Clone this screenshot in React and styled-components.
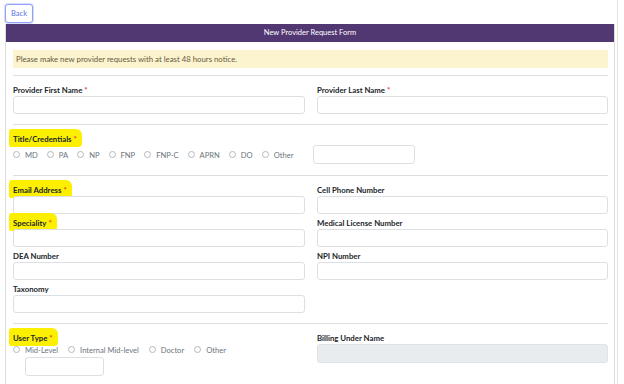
import React from 'react';
import styled, { createGlobalStyle } from 'styled-components';

const Global = createGlobalStyle`
  html, body { margin: 0; padding: 0; background: #fff; overflow: hidden; }
  body { font-family: Lato, "Open Sans", sans-serif; color: #212529; }
`;

const Page = styled.div`
  width: 618px;
  height: 384px;
  border-right: 1px solid #e3e3e3;
  padding: 4px 0 0 5px;
  box-sizing: border-box;
`;

const BackButton = styled.button`
  display: block;
  width: 28px;
  height: 19px;
  padding: 0;
  background: #fff;
  border: 1px solid #8fa2f5;
  border-radius: 3px;
  box-shadow: 0 0 0 1px rgba(143, 162, 245, 0.35);
  color: #5a72e4;
  font-family: inherit;
  font-size: 7.5px;
  cursor: pointer;
`;

const Card = styled.div`
  margin-top: 1px;
  width: 610px;
  border: 1px solid #dcdcdc;
  border-top: none;
  box-sizing: border-box;
`;

const Header = styled.div`
  height: 18px;
  line-height: 18px;
  background: #523872;
  color: #fff;
  text-align: center;
  font-size: 7.5px;
`;

const Body = styled.div`
  padding: 8px 6px 0 7px;
`;

const Notice = styled.div`
  height: 18px;
  line-height: 18px;
  padding: 0 3px;
  background: #fcf3cf;
  color: #665a3c;
  font-size: 7.8px;
  margin-bottom: 7px;
`;

const Rule = styled.hr`
  margin: 0;
  border: none;
  border-top: 1px solid #dedede;
`;

const Section = styled.div`
  padding: 9px 0 ${p => p.$bottom || 10}px;
`;

const Grid = styled.div`
  display: grid;
  grid-template-columns: 292px 291px;
  column-gap: 12px;
  row-gap: ${p => p.$rowGap || 0}px;
`;

const Field = styled.div`
  display: flex;
  flex-direction: column;
`;

const Label = styled.label`
  display: block;
  height: 11px;
  line-height: 10px;
  font-size: 7.8px;
  font-weight: 700;
  color: #212529;
  white-space: nowrap;
`;

const Req = styled.span`
  color: #e03a3a;
  margin-left: 2px;
`;

const Highlight = styled.span`
  background: #fcf000;
  border-radius: 3px 6px 4px 2px;
  padding: 5px 5px 3px 4px;
  margin: -5px -5px -3px -4px;
`;

const Input = styled.input`
  box-sizing: border-box;
  width: ${p => p.$width || '100%'};
  height: ${p => p.$height || 18}px;
  margin: 0;
  margin-left: ${p => p.$indent || 0}px;
  margin-top: ${p => p.$top || 0}px;
  border: 1px solid ${p => (p.disabled ? '#dfe2e6' : '#dcdfe3')};
  border-radius: 3px;
  background: ${p => (p.disabled ? '#e9ecef' : '#fff')};
  font-family: inherit;
  font-size: 7.5px;
`;

const RadioLine = styled.div`
  display: flex;
  align-items: center;
  height: ${p => p.$height || 19}px;
`;

const RadioItem = styled.label`
  display: flex;
  align-items: center;
  margin-right: ${p => p.$gap || 9}px;
  font-size: 7.6px;
  color: #6c757d;
  white-space: nowrap;
`;

const Circle = styled.span`
  width: 7px;
  height: 7px;
  box-sizing: border-box;
  border: 1px solid #b3b8be;
  border-radius: 50%;
  margin-right: 5px;
  background: #fff;
`;

const titles = ['MD', 'PA', 'NP', 'FNP', 'FNP-C', 'APRN', 'DO', 'Other'];
const userTypes = ['Mid-Level', 'Internal Mid-level', 'Doctor', 'Other'];

const TextField = ({ label, required, marked }) => {
  const text = (
    <>
      {label}
      {required && <Req>*</Req>}
    </>
  );
  return (
    <Field>
      <Label>{marked ? <Highlight>{text}</Highlight> : text}</Label>
      <Input />
    </Field>
  );
};

export default function App() {
  return (
    <>
      <Global />
      <Page>
        <BackButton>Back</BackButton>
        <Card>
          <Header>New Provider Request Form</Header>
          <Body>
            <Notice>Please make new provider requests with at least 48 hours notice.</Notice>
            <Rule />

            <Section>
              <Grid>
                <TextField label="Provider First Name" required />
                <TextField label="Provider Last Name" required />
              </Grid>
            </Section>
            <Rule />

            <Section $bottom={11}>
              <Label>
                <Highlight>
                  Title/Credentials<Req>*</Req>
                </Highlight>
              </Label>
              <RadioLine>
                {titles.map(t => (
                  <RadioItem key={t} $gap={t === 'Other' ? 20 : 9}>
                    <Circle />
                    {t}
                  </RadioItem>
                ))}
                <Input $width="102px" $height={19} />
              </RadioLine>
            </Section>
            <Rule />

            <Section>
              <Grid $rowGap={4}>
                <TextField label="Email Address" required marked />
                <TextField label="Cell Phone Number" />
                <TextField label="Speciality" required marked />
                <TextField label="Medical License Number" />
                <TextField label="DEA Number" />
                <TextField label="NPI Number" />
                <TextField label="Taxonomy" />
              </Grid>
            </Section>
            <Rule />

            <Section>
              <Grid>
                <Field>
                  <Label>
                    <Highlight>
                      User Type<Req>*</Req>
                    </Highlight>
                  </Label>
                  <RadioLine $height={11}>
                    {userTypes.map(t => (
                      <RadioItem key={t} $gap={10}>
                        <Circle />
                        {t}
                      </RadioItem>
                    ))}
                  </RadioLine>
                  <Input $width="79px" $height={19} $indent={12} $top={2} />
                </Field>
                <Field>
                  <Label>Billing Under Name</Label>
                  <Input $height={19} disabled />
                </Field>
              </Grid>
            </Section>
          </Body>
        </Card>
      </Page>
    </>
  );
}
